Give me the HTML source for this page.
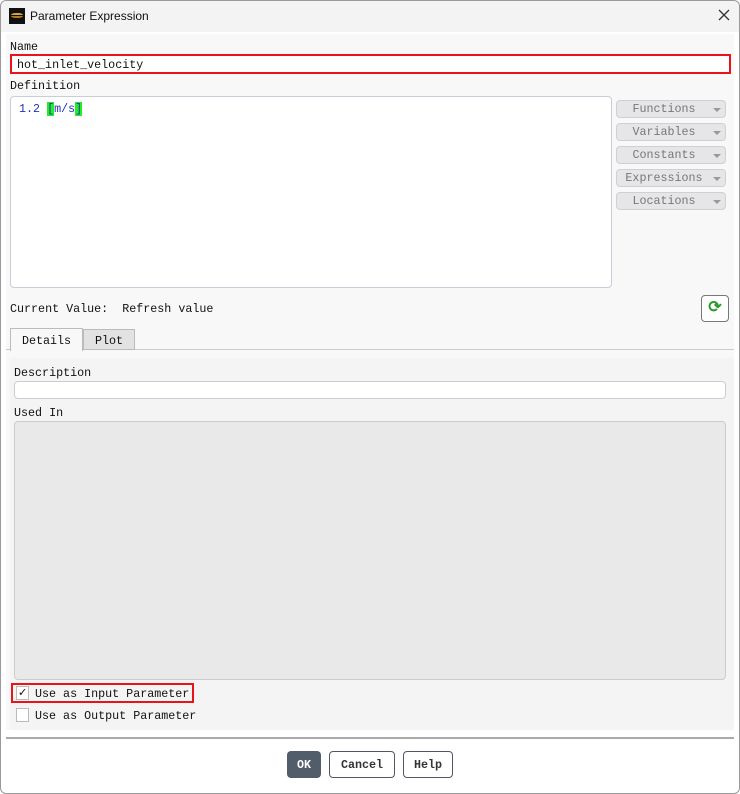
<!DOCTYPE html>
<html><head><style>
*{box-sizing:border-box;margin:0;padding:0}
body{width:740px;height:794px;background:#fff;font-family:"Liberation Mono",monospace;font-size:11.7px;color:#111;position:relative;overflow:hidden}
.a{position:absolute}
.btnr{position:absolute;left:616px;width:110px;height:18px;border:1px solid #d0d0d0;border-radius:4px;background:#e6e6e8;color:#777;text-align:center;line-height:17px;padding-right:14px}
.btnr:after{content:"";position:absolute;right:4px;top:7px;border:4px solid transparent;border-top:4px solid #999}
</style></head><body>
<div class="a" style="left:0;top:0;width:740px;height:794px;border:1px solid #9a9a9a;border-radius:6px"></div>
<div class="a" style="left:1px;top:1px;width:738px;height:31px;background:#f3f3f3;border-radius:6px 6px 0 0"></div>
<div class="a" style="left:9px;top:8px;width:16px;height:16px;background:#111"><div style="margin:5px 2px;height:5px;border-top:2px solid #d9a53a;border-bottom:2px solid #b07a20;border-radius:40%"></div></div>
<div class="a" style="left:30px;top:9px;font-family:'Liberation Sans',sans-serif;font-size:12px">Parameter Expression</div>
<svg class="a" style="left:718px;top:9px" width="12" height="12"><path d="M1 1L11 11M11 1L1 11" stroke="#333" stroke-width="1.3"/></svg>
<div class="a" style="left:6px;top:34px;width:728px;height:696px;background:#f8f8f8"></div>
<div class="a" style="left:10px;top:40px">Name</div>
<div class="a" style="left:10px;top:54px;width:721px;height:20px;border:2px solid #e8141a;background:#fff;padding-left:5px;line-height:18px">hot_inlet_velocity</div>
<div class="a" style="left:10px;top:79px">Definition</div>
<div class="a" style="left:10px;top:96px;width:602px;height:192px;border:1px solid #c9ced6;border-radius:4px;background:#fff"></div>
<div class="a" style="left:19px;top:102px;color:#2030c0">1.2 <span style="background:#22ee22">[</span>m/s<span style="background:#22ee22">]</span></div>
<div class="btnr" style="top:100px">Functions</div>
<div class="btnr" style="top:123px">Variables</div>
<div class="btnr" style="top:146px">Constants</div>
<div class="btnr" style="top:169px">Expressions</div>
<div class="btnr" style="top:192px">Locations</div>
<div class="a" style="left:10px;top:302px">Current Value:&nbsp; Refresh value</div>
<div class="a" style="left:701px;top:295px;width:28px;height:27px;border:1px solid #777;border-radius:4px;background:#fff;color:#2a9a2a;font-size:16px;text-align:center;line-height:24px;font-weight:bold">⟳</div>
<div class="a" style="left:6px;top:349px;width:728px;height:1px;background:#ccc"></div>
<div class="a" style="left:10px;top:328px;width:73px;height:23px;border:1px solid #bbb;border-bottom:none;background:#f8f8f8;text-align:center;line-height:24px">Details</div>
<div class="a" style="left:83px;top:329px;width:52px;height:21px;border:1px solid #bbb;background:#e2e2e2;text-align:center;line-height:22px">Plot</div>
<div class="a" style="left:10px;top:358px;width:724px;height:372px;background:#f4f4f4"></div>
<div class="a" style="left:14px;top:366px">Description</div>
<div class="a" style="left:14px;top:381px;width:712px;height:18px;border:1px solid #c9ced6;border-radius:4px;background:#fff"></div>
<div class="a" style="left:14px;top:406px">Used In</div>
<div class="a" style="left:14px;top:421px;width:712px;height:259px;border:1px solid #ccc;border-radius:4px;background:#e9e9e9"></div>
<div class="a" style="left:11px;top:683px;width:183px;height:20px;border:2px solid #e8141a"></div>
<div class="a" style="left:16px;top:686px;width:13px;height:14px;border:1px solid #bbb;background:#fff;font-size:13px;line-height:12px;text-align:center">✓</div>
<div class="a" style="left:35px;top:687px">Use as Input Parameter</div>
<div class="a" style="left:16px;top:708px;width:13px;height:14px;border:1px solid #bbb;background:#fff"></div>
<div class="a" style="left:35px;top:709px">Use as Output Parameter</div>
<div class="a" style="left:6px;top:737px;width:728px;height:2px;background:#aaa"></div>
<div class="a" style="left:287px;top:751px;width:34px;height:27px;border-radius:4px;background:#515d6b;color:#fff;font-weight:bold;text-align:center;line-height:28px">OK</div>
<div class="a" style="left:329px;top:751px;width:66px;height:27px;border-radius:4px;border:1px solid #556;background:#fff;color:#333;font-weight:bold;text-align:center;line-height:26px">Cancel</div>
<div class="a" style="left:403px;top:751px;width:50px;height:27px;border-radius:4px;border:1px solid #556;background:#fff;color:#333;font-weight:bold;text-align:center;line-height:26px">Help</div>
</body></html>
